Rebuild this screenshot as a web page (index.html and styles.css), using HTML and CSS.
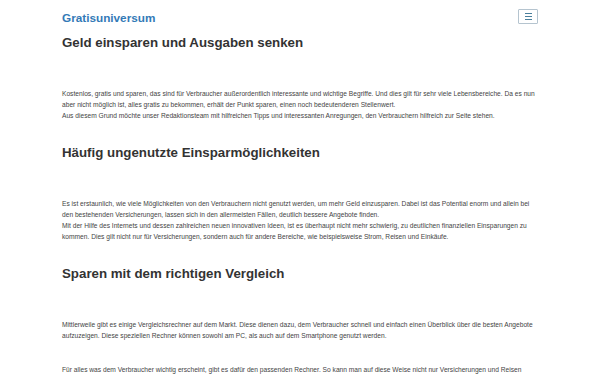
FILE: index.html
```html
<!DOCTYPE html>
<html lang="de">
<head>
    <meta charset="UTF-8">
    <title>Gratisuniversum</title>
    <meta name="viewport" content="width=device-width, initial-scale=1">
    <link rel="stylesheet" href="styles.css">
</head>
<body>
    <div class="container">
        <nav class="navbar">
            <a href="#" class="brand">Gratisuniversum</a>
            <button class="toggler" type="button" aria-label="Menü">
                <span class="toggler-icon"></span>
            </button>
        </nav>

        <h2 class="section-title">Geld einsparen und Ausgaben senken</h2>
        <p>Kostenlos, gratis und sparen, das sind für Verbraucher außerordentlich interessante und wichtige Begriffe. Und dies gilt für sehr viele Lebensbereiche. Da es nun aber nicht möglich ist, alles gratis zu bekommen, erhält der Punkt sparen, einen noch bedeutenderen Stellenwert.<br>Aus diesem Grund möchte unser Redaktionsteam mit hilfreichen Tipps und interessanten Anregungen, den Verbrauchern hilfreich zur Seite stehen.</p>

        <h2 class="section-title">Häufig ungenutzte Einsparmöglichkeiten</h2>
        <p>Es ist erstaunlich, wie viele Möglichkeiten von den Verbrauchern nicht genutzt werden, um mehr Geld einzusparen. Dabei ist das Potential enorm und allein bei den bestehenden Versicherungen, lassen sich in den allermeisten Fällen, deutlich bessere Angebote finden.<br>Mit der Hilfe des Internets und dessen zahlreichen neuen innovativen Ideen, ist es überhaupt nicht mehr schwierig, zu deutlichen finanziellen Einsparungen zu kommen. Dies gilt nicht nur für Versicherungen, sondern auch für andere Bereiche, wie beispielsweise Strom, Reisen und Einkäufe.</p>

        <h2 class="section-title">Sparen mit dem richtigen Vergleich</h2>
        <p>Mittlerweile gibt es einige Vergleichsrechner auf dem Markt. Diese dienen dazu, dem Verbraucher schnell und einfach einen Überblick über die besten Angebote aufzuzeigen. Diese speziellen Rechner können sowohl am PC, als auch auf dem Smartphone genutzt werden.</p>
        <p>Für alles was dem Verbraucher wichtig erscheint, gibt es dafür den passenden Rechner. So kann man auf diese Weise nicht nur Versicherungen und Reisen vergleichen, sondern auch Strom- und Gasanbieter, Kredite oder Mobilfunktarife.</p>
    </div>
</body>
</html>
```

FILE: styles.css
```css
body {
    font-family: 'Liberation Sans', Arial, sans-serif;
    margin: 0;
    color: #333;
    background: #fff;
}
.container {
    width: 476px;
    margin: 0 auto;
}
.navbar {
    display: flex;
    justify-content: space-between;
    align-items: center;
    height: 34px;
}
.brand {
    color: #337ab7;
    font-size: 11.75px;
    font-weight: bold;
    text-decoration: none;
}
.toggler {
    width: 20px;
    height: 15px;
    padding: 0;
    margin-top: -1px;
    background: #fff;
    border: 1px solid #b5c4cf;
    border-radius: 1px;
    display: flex;
    align-items: center;
    justify-content: center;
}
.toggler-icon {
    width: 7px;
    height: 5px;
    border-top: 1px solid #4a7f9c;
    border-bottom: 1px solid #4a7f9c;
    position: relative;
}
.toggler-icon::after {
    content: "";
    position: absolute;
    left: 0;
    right: 0;
    top: 2px;
    border-top: 1px solid #4a7f9c;
}
.section-title {
    font-size: 13.3px;
    line-height: 18px;
    font-weight: bold;
    margin: 0 0 36px;
}
p {
    font-size: 6.65px;
    line-height: 11px;
    color: #444;
    margin: 0 0 23px;
}
```
